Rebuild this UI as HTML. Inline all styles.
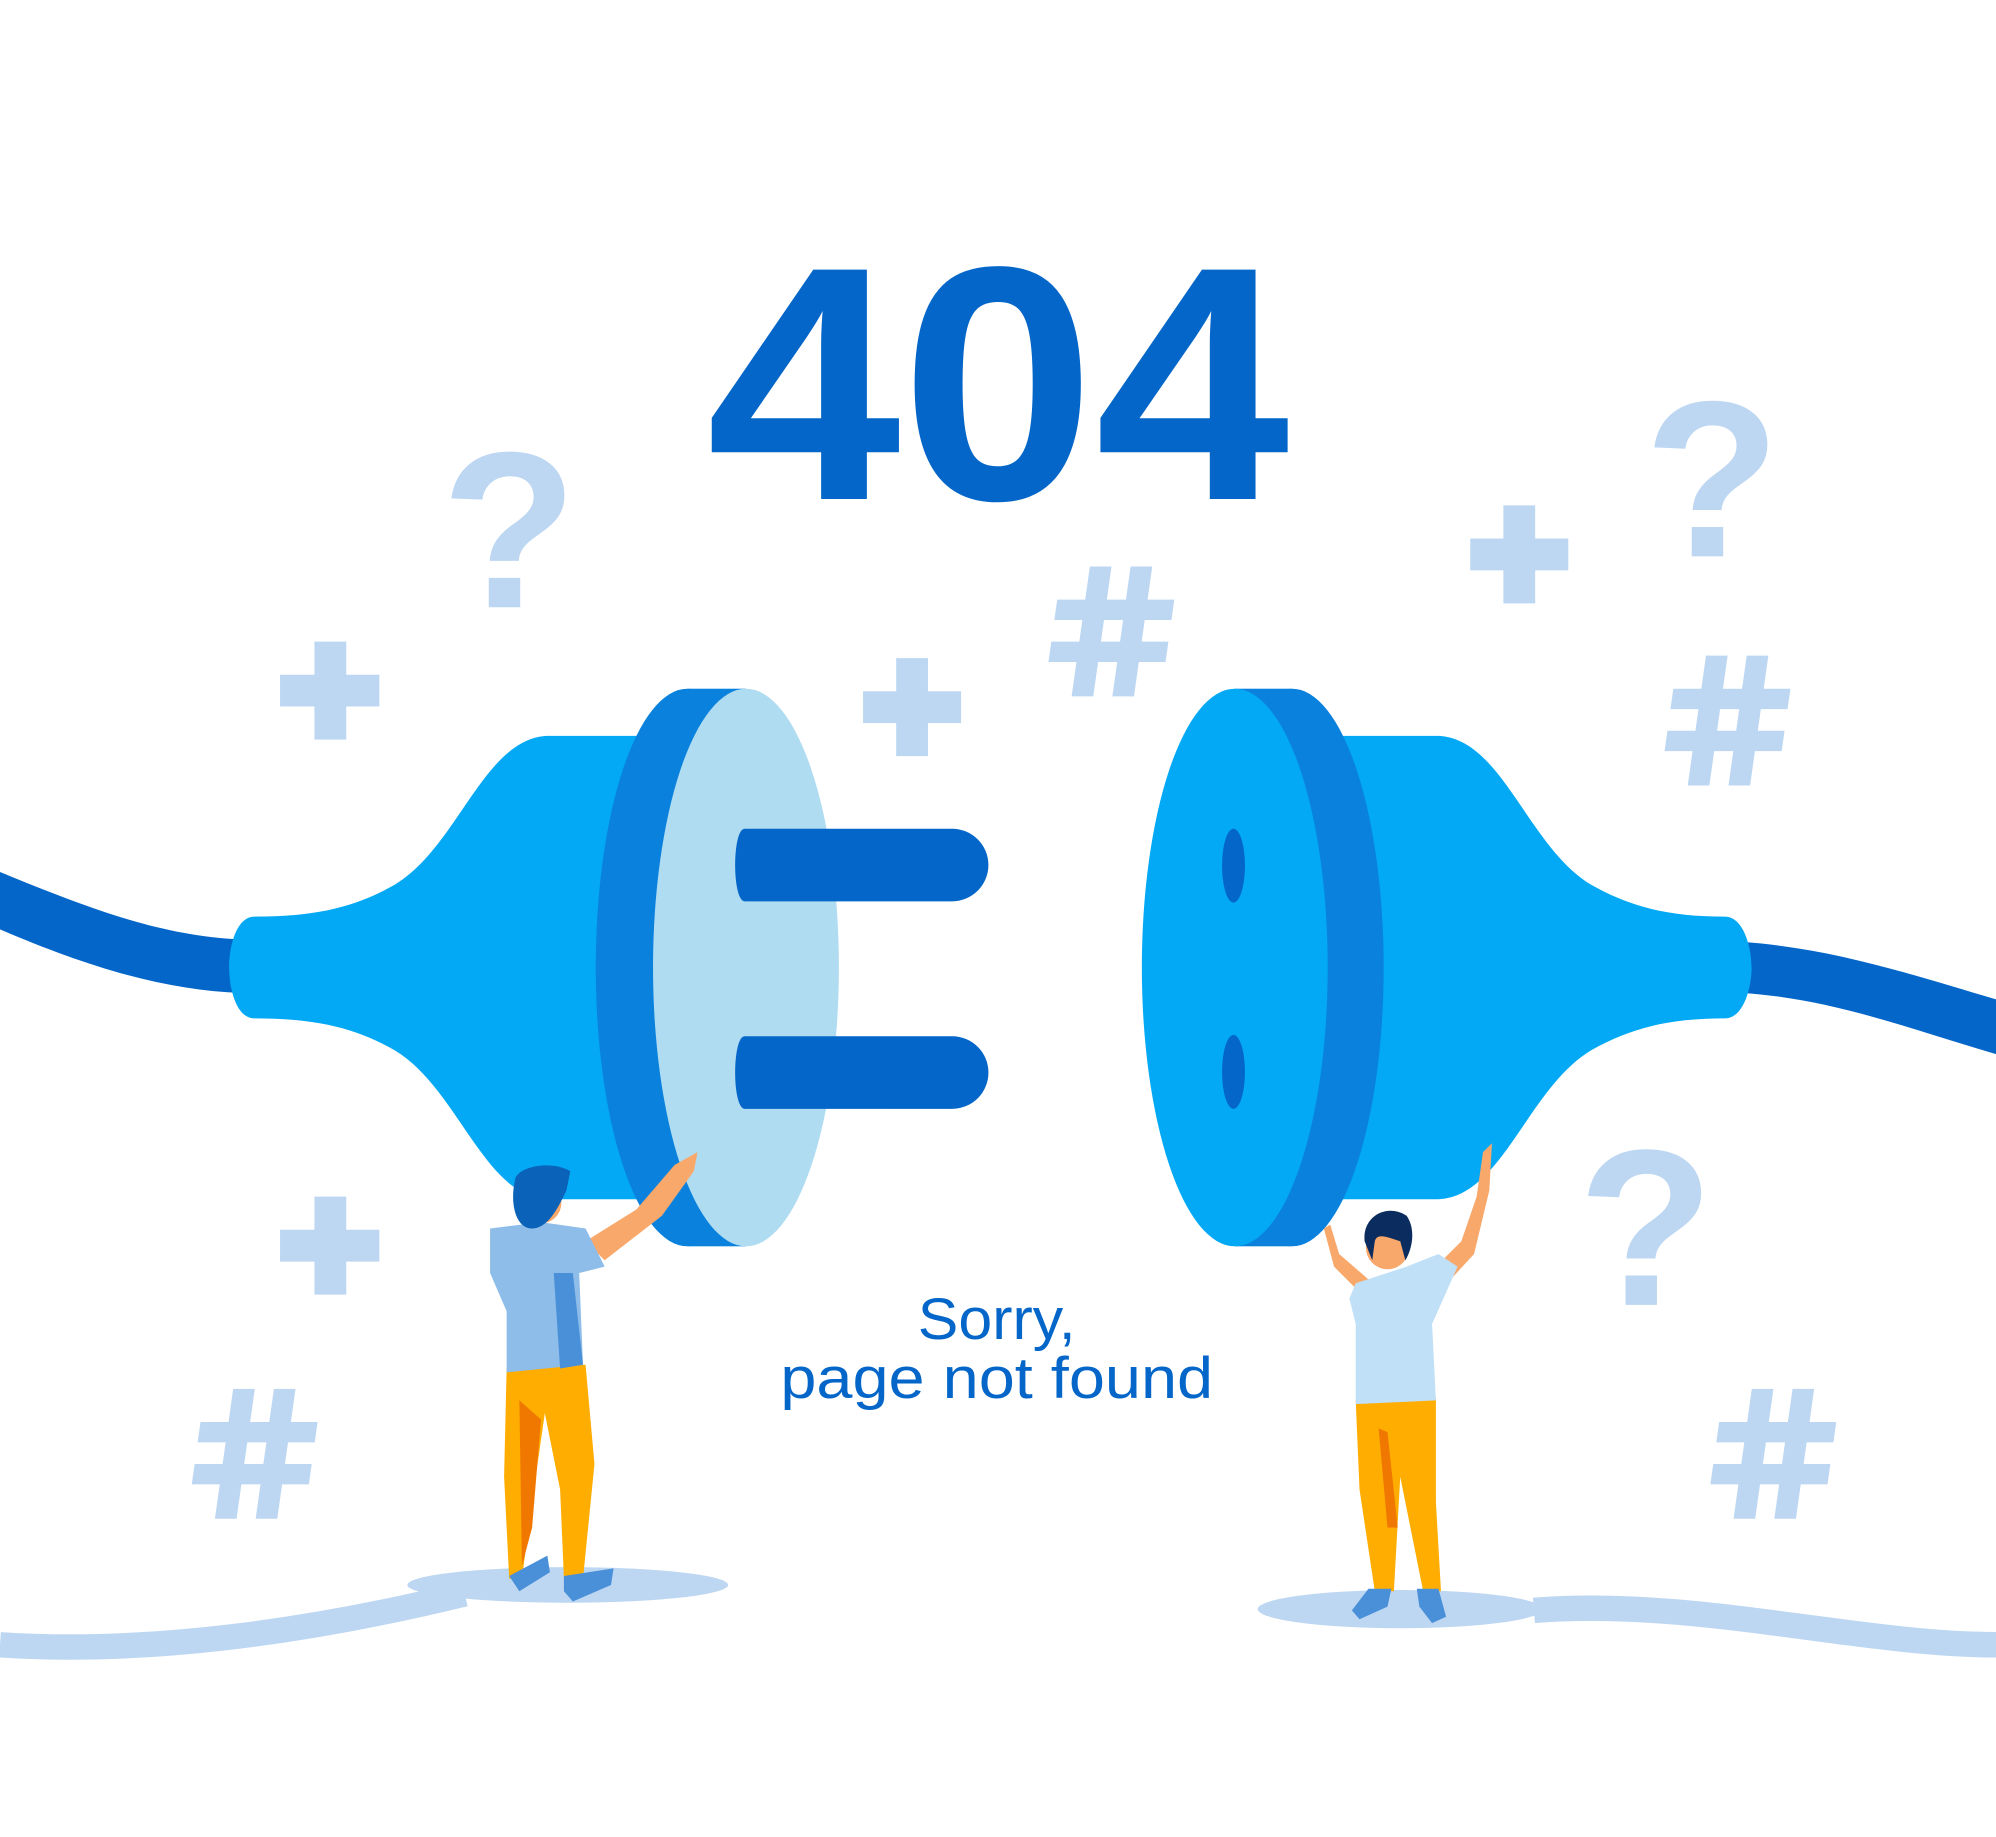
<!DOCTYPE html>
<html><head><meta charset="utf-8"><style>
html,body{margin:0;padding:0;background:#fff;}
svg{display:block;}
</style></head><body>
<svg width="1996" height="1837" viewBox="0 0 1568 1443" xmlns="http://www.w3.org/2000/svg" preserveAspectRatio="none">
<defs>
<g id="hash"><g transform="skewX(-8)">
<rect x="-24" y="-51" width="17" height="102"/><rect x="8" y="-51" width="17" height="102"/>
<rect x="-46" y="-25" width="92" height="16"/><rect x="-46" y="8" width="92" height="16"/>
</g></g>
</defs>
<rect width="1568" height="1443" fill="#fff"/>
<!-- ground -->
<path d="M0,1292 C120,1300 250,1280 365,1252" stroke="#BDD7F2" stroke-width="20" fill="none"/>
<ellipse cx="446" cy="1245" rx="126" ry="14" fill="#BDD7F2"/>
<path d="M1205,1265 C1330,1255 1460,1292 1568,1292" stroke="#BDD7F2" stroke-width="20" fill="none"/>
<ellipse cx="1100" cy="1264" rx="112" ry="15" fill="#BDD7F2"/>
<!-- decorations -->
<g fill="#BDD7F2" font-family="Liberation Sans, sans-serif" font-weight="bold">
<text x="400" y="477" font-size="175" text-anchor="middle">?</text>
<text x="1345" y="437" font-size="175" text-anchor="middle">?</text>
<text x="1293" y="1025" font-size="175" text-anchor="middle">?</text>
<use href="#hash" x="873" y="496"/>
<use href="#hash" x="1357" y="566"/>
<use href="#hash" x="200" y="1142"/>
<use href="#hash" x="1393" y="1142"/>
<path d="M247,504h25v26h26v25h-26v26h-25v-26h-27v-25h27z"/>
<path d="M704,517h25v26h26v25h-26v26h-25v-26h-26v-25h26z"/>
<path d="M247,940h25v26h26v25h-26v26h-25v-26h-27v-25h27z"/>
<path d="M1181,397h25v26h26v25h-26v26h-25v-26h-26v-25h26z"/>
</g>
<!-- 404 -->
<text x="555" y="392" font-family="Liberation Sans, sans-serif" font-weight="bold" font-size="262" fill="#0466C8" textLength="458" lengthAdjust="spacingAndGlyphs">404</text>
<!-- left cable & plug -->
<path d="M0,685 C80,718 130,735 190,738 L190,780 C130,778 70,760 0,730 Z" fill="#0466C8"/>
<path d="M200,720 C250,720 280,712 310,695 C360,665 380,580 430,578 L505,578 L505,942 L430,942 C380,940 360,855 310,825 C280,808 250,800 200,800 C185,800 180,775 180,760 C180,745 185,720 200,720 Z" fill="#03A9F4"/>
<ellipse cx="540" cy="760" rx="72" ry="219" fill="#0A82DD"/>
<rect x="540" y="541" width="46" height="438" fill="#0A82DD"/>
<ellipse cx="586" cy="760" rx="73" ry="219" fill="#B0DCF2"/>
<path d="M585,651 H748 A28,28 0 0 1 748,708 H585 C575,708 575,651 585,651 Z" fill="#0466C8"/>
<path d="M585,814 H748 A28,28 0 0 1 748,871 H585 C575,871 575,814 585,814 Z" fill="#0466C8"/>
<!-- right cable & plug -->
<path d="M1370,740 C1440,745 1500,765 1568,785 L1568,828 C1500,808 1440,785 1370,780 Z" fill="#0466C8"/>
<path d="M1055,578 L1130,578 C1180,580 1200,665 1250,695 C1280,712 1310,720 1355,720 C1370,720 1376,745 1376,760 C1376,775 1370,800 1355,800 C1310,800 1280,808 1250,825 C1200,855 1180,940 1130,942 L1055,942 Z" fill="#03A9F4"/>
<ellipse cx="1015" cy="760" rx="72" ry="219" fill="#0A82DD"/>
<rect x="970" y="541" width="45" height="438" fill="#0A82DD"/>
<ellipse cx="970" cy="760" rx="73" ry="219" fill="#03A9F4"/>
<ellipse cx="969" cy="680" rx="9" ry="29" fill="#0466C8"/>
<ellipse cx="969" cy="842" rx="9" ry="29" fill="#0466C8"/>
<!-- text -->
<g font-family="Liberation Sans, sans-serif" fill="#0466C8" text-anchor="middle" font-size="46">
<text x="783" y="1052" textLength="124" lengthAdjust="spacingAndGlyphs">Sorry,</text>
<text x="783" y="1098" textLength="340" lengthAdjust="spacingAndGlyphs">page not found</text>
</g>
<!-- left person -->
<path d="M460,975 L500,950 L530,915 L548,905 L545,920 L520,955 L475,990 Z" fill="#F9A86B"/>
<path d="M398,1075 L460,1072 L467,1150 L458,1240 L443,1240 L440,1170 L428,1110 L418,1180 L410,1240 L400,1240 L396,1160 Z" fill="#FFAD00"/>
<path d="M408,1100 L425,1115 L418,1200 L410,1230 Z" fill="#F07800"/>
<path d="M443,1238 L482,1232 L480,1245 L450,1258 L443,1250 Z" fill="#4A90D9"/>
<path d="M400,1238 L430,1222 L432,1235 L408,1250 Z" fill="#4A90D9"/>
<path d="M385,965 L425,960 L460,965 L475,995 L455,1000 L458,1072 L398,1078 L398,1030 L385,1000 Z" fill="#8DBDE8"/>
<path d="M435,1000 L450,1000 L458,1072 L440,1075 Z" fill="#4A90D9"/>
<circle cx="425" cy="945" r="16" fill="#F9A86B"/>
<path d="M405,925 C410,915 435,912 448,920 L445,935 C438,950 430,965 418,965 C405,965 400,945 405,925 Z" fill="#0A63B8"/>
<!-- right person -->
<path d="M1040,965 L1048,995 L1068,1015 L1075,1005 L1052,985 L1045,962 Z" fill="#F9A86B"/>
<path d="M1128,995 L1148,975 L1160,940 L1165,905 L1172,898 L1170,935 L1158,985 L1135,1010 Z" fill="#F9A86B"/>
<path d="M1065,1100 L1128,1098 L1128,1180 L1132,1250 L1118,1250 L1100,1160 L1095,1250 L1080,1250 L1068,1170 Z" fill="#FFAD00"/>
<path d="M1083,1122 L1090,1125 L1098,1200 L1090,1200 Z" fill="#F07800"/>
<path d="M1075,1248 L1093,1248 L1090,1262 L1068,1272 L1062,1265 Z" fill="#4A90D9"/>
<path d="M1113,1248 L1130,1248 L1136,1270 L1125,1275 L1115,1262 Z" fill="#4A90D9"/>
<path d="M1065,1008 L1105,995 L1130,985 L1145,995 L1125,1040 L1128,1100 L1065,1103 L1065,1040 L1060,1020 Z" fill="#BFE0F7"/>
<circle cx="1090" cy="980" r="17" fill="#F9A86B"/>
<path d="M1072,975 C1070,955 1090,945 1105,955 C1112,965 1110,980 1104,990 L1100,975 C1090,972 1082,968 1080,975 L1078,990 Z" fill="#0B2C5E"/>
</svg>
</body></html>
